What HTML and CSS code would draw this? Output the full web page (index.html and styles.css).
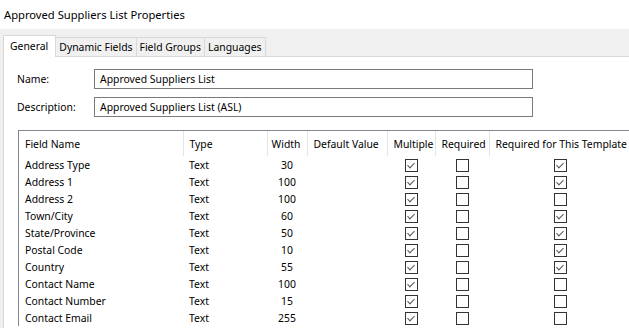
FILE: index.html
```html
<!DOCTYPE html>
<html lang="en">

<head>
    <meta charset="UTF-8">
    <title>Approved Suppliers List Properties</title>
    <link rel="stylesheet" href="styles.css">
</head>

<body>
    <div class="title">Approved Suppliers List Properties</div>

    <div class="dialog">
        <div class="tabs">
            <div class="tab active">General</div>
            <div class="tab">Dynamic Fields</div>
            <div class="tab">Field Groups</div>
            <div class="tab">Languages</div>
        </div>

        <div class="panel">
            <div class="form-row">
                <label>Name:</label>
                <div class="input">Approved Suppliers List</div>
            </div>
            <div class="form-row">
                <label>Description:</label>
                <div class="input">Approved Suppliers List (ASL)</div>
            </div>

            <div class="grid-box">
                <table class="fields">
                    <colgroup>
                        <col class="c-name">
                        <col class="c-type">
                        <col class="c-width">
                        <col class="c-default">
                        <col class="c-multi">
                        <col class="c-req">
                        <col class="c-tpl">
                    </colgroup>
                    <thead>
                        <tr>
                            <th>Field Name</th>
                            <th>Type</th>
                            <th class="num">Width</th>
                            <th>Default Value</th>
                            <th>Multiple</th>
                            <th>Required</th>
                            <th>Required for This Template</th>
                        </tr>
                    </thead>
                    <tbody id="rows">
                        <!-- rows are added by the script below -->
                    </tbody>
                </table>
            </div>
        </div>
    </div>

    <script>
        const fields = [
            ['Address Type', 'Text', 30, true, false, true],
            ['Address 1', 'Text', 100, true, false, true],
            ['Address 2', 'Text', 100, true, false, false],
            ['Town/City', 'Text', 60, true, false, true],
            ['State/Province', 'Text', 50, true, false, true],
            ['Postal Code', 'Text', 10, true, false, true],
            ['Country', 'Text', 55, true, false, true],
            ['Contact Name', 'Text', 100, true, false, false],
            ['Contact Number', 'Text', 15, true, false, false],
            ['Contact Email', 'Text', 255, true, false, false]
        ];

        function box(checked) {
            return '<span class="check' + (checked ? ' on' : '') + '"></span>';
        }

        const rows = document.getElementById('rows');
        fields.forEach(f => {
            const tr = document.createElement('tr');
            tr.innerHTML = `
                <td>${f[0]}</td>
                <td>${f[1]}</td>
                <td class="num">${f[2]}</td>
                <td></td>
                <td class="mid">${box(f[3])}</td>
                <td class="mid">${box(f[4])}</td>
                <td class="mid">${box(f[5])}</td>
            `;
            rows.appendChild(tr);
        });
    </script>
</body>

</html>
```

FILE: styles.css
```css
body {
    margin: 0;
    background-color: #fff;
    font-family: "Noto Sans", "Open Sans", sans-serif;
    font-size: 10.4px;
    color: #000;
    overflow: hidden;
}

.title {
    height: 29px;
    line-height: 29px;
    padding-left: 4px;
    font-size: 11.2px;
    white-space: nowrap;
}

.dialog {
    background-color: #f0f0f0;
    padding-left: 3px;
    height: 299px;
}

.tabs {
    display: flex;
    align-items: flex-end;
    height: 27px;
    border-bottom: 1px solid #d9d9d9;
}

.tab {
    height: 18px;
    line-height: 18px;
    padding: 0 3px;
    border: 1px solid #d9d9d9;
    border-bottom: none;
    border-left: none;
    background-color: #f0f0f0;
    white-space: nowrap;
}

.tab.active {
    height: 21px;
    line-height: 20px;
    margin-bottom: -1px;
    padding: 0 7px 0 6px;
    border-left: 1px solid #d9d9d9;
    background-color: #fff;
}

.panel {
    background-color: #fff;
    border-left: 1px solid #d9d9d9;
    height: 270px;
    padding: 12px 0 0 13px;
    overflow: hidden;
}

.form-row {
    display: flex;
    align-items: center;
    height: 20px;
    margin-bottom: 8px;
}

.form-row label {
    width: 77px;
}

.input {
    width: 429px;
    height: 18px;
    line-height: 18px;
    padding: 0 3px 0 5px;
    border: 1px solid #7a7a7a;
    white-space: nowrap;
}

.grid-box {
    margin: 13px 0 0 1px;
    border-top: 1px solid #828790;
    border-left: 1px solid #828790;
    width: 700px;
}

.fields {
    border-collapse: collapse;
    table-layout: fixed;
    width: 613px;
}

.c-name { width: 164px; }
.c-type { width: 84px; }
.c-width { width: 40px; }
.c-default { width: 80px; }
.c-multi { width: 48px; }
.c-req { width: 54px; }
.c-tpl { width: 143px; }

.fields th {
    height: 25px;
    padding: 0 0 0 6px;
    font-weight: normal;
    text-align: left;
    white-space: nowrap;
    border-right: 1px solid #e5e5e5;
}

.fields th:last-child {
    border-right: none;
}

.fields td {
    height: 17px;
    padding: 0 0 0 6px;
    white-space: nowrap;
}

.fields .num {
    text-align: center;
    padding: 0;
}

.fields th.num {
    text-align: right;
    padding-right: 6px;
}

.fields .mid {
    text-align: center;
    padding: 0;
}

.check {
    display: inline-block;
    width: 11px;
    height: 11px;
    border: 1px solid #333;
    vertical-align: middle;
    position: relative;
}

.check.on::after {
    content: "";
    position: absolute;
    left: 3px;
    top: 1px;
    width: 3px;
    height: 6px;
    border-right: 1.5px solid #555;
    border-bottom: 1.5px solid #555;
    transform: rotate(45deg);
}
```
